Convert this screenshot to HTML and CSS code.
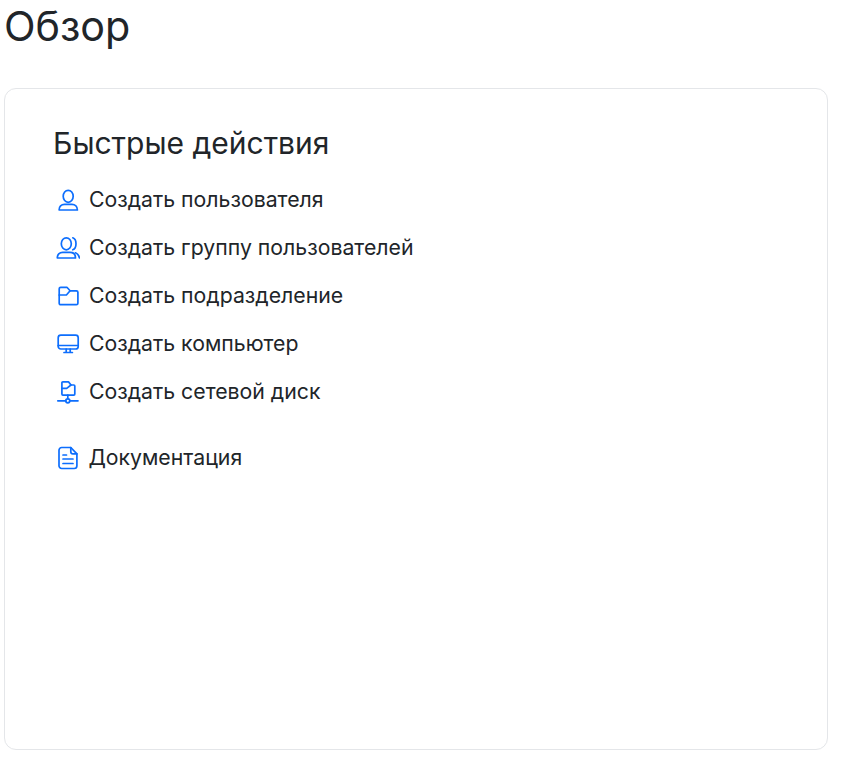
FILE: index.html
```html
<!DOCTYPE html>
<html lang="ru">
<head>
    <meta charset="UTF-8">
    <meta name="viewport" content="width=device-width, initial-scale=1.0">
    <title>Обзор</title>
    <link rel="stylesheet" href="styles.css">
</head>
<body>
    <h1 class="page-title">Обзор</h1>
    <div class="card">
        <h2 class="card-title">Быстрые действия</h2>
        <ul class="actions">
            <li class="action">
                <svg class="action-icon" viewBox="0 0 24 24"><ellipse cx="12.200" cy="8.300" rx="5" ry="6"/><path d="M3.100 22c-.1-3.400 2.200-5.600 5.400-5.600h7.400c3.200 0 5.500 2.200 5.500 5.600z"/></svg>
                <span>Создать пользователя</span>
            </li>
            <li class="action">
                <svg class="action-icon" viewBox="0 0 24 24"><ellipse cx="10.300" cy="7.800" rx="5" ry="6"/><path d="M1.300 22c-.1-3.400 2.200-5.600 5.400-5.600h7.400c3.200 0 5.400 2.200 5.400 5.600z"/><path d="M16.800 1.800c2 .7 3.200 3.200 3.200 6s-1.200 5.300-3.200 6"/><path d="M19.500 16.800c2 .9 3.600 2.700 3.900 5.200"/></svg>
                <span>Создать группу пользователей</span>
            </li>
            <li class="action">
                <svg class="action-icon" viewBox="0 0 24 24"><path d="M3.200 4.800c0-.9.700-1.500 1.500-1.500h6.200l3.200 3.500h6.300c.9 0 1.500.7 1.500 1.500v10.900c0 .9-.6 1.500-1.500 1.500H4.700c-.8 0-1.500-.6-1.500-1.500z"/><path d="M3.200 11h7.200l3.700-4.200"/></svg>
                <span>Создать подразделение</span>
            </li>
            <li class="action">
                <svg class="action-icon" viewBox="0 0 24 24"><rect x="2.200" y="3.200" width="20" height="13.800" rx="2.600"/><path d="M2.200 13.500h20"/><path d="M10.200 17v3.500M14.200 17v3.500M8 20.500h8.400"/></svg>
                <span>Создать компьютер</span>
            </li>
            <li class="action">
                <svg class="action-icon" viewBox="0 0 24 24"><path d="M5.900 2.900c0-.6.400-1 1-1h5.600l2.500 3.100h2.800c.6 0 1 .4 1 1v8.100c0 .6-.4 1-1 1H6.900c-.6 0-1-.4-1-1z"/><path d="M5.900 8.400h4.800L15 5"/><path d="M11.800 15v3.500"/><circle cx="11.800" cy="20.800" r="2"/><path d="M1.800 20.800h8M13.800 20.800h8.200"/></svg>
                <span>Создать сетевой диск</span>
            </li>
            <li class="action action-docs">
                <svg class="action-icon" viewBox="0 0 24 24"><path d="M5.700 1.500h9.100l6.100 6.300v12c0 1.500-1.200 2.700-2.700 2.700H5.700c-1.500 0-2.700-1.200-2.700-2.700V4.200c0-1.500 1.200-2.700 2.700-2.700z"/><path d="M14.800 1.500v4.200c0 1.200.9 2.100 2.100 2.100h4"/><path d="M7 9h3.500M7 13h10M7 17.500h10"/></svg>
                <span>Документация</span>
            </li>
        </ul>
    </div>
</body>
</html>
```

FILE: styles.css
```css
* {
    box-sizing: border-box;
}
body {
    margin: 0;
    padding: 0 14px 13px 4px;
    background: #fff;
    color: #212529;
    font-family: Inter, "Noto Sans", sans-serif;
}
.page-title {
    margin: 0 0 32px;
    height: 56px;
    font-size: 41.25px;
    font-weight: 400;
    line-height: 52px;
}
.card {
    height: 662px;
    padding: 36px 48px;
    border: 1px solid #e4e6e9;
    border-radius: 12px;
    background: #fff;
}
.card-title {
    margin: 0 0 15px;
    font-size: 30px;
    font-weight: 400;
    line-height: 36px;
}
.actions {
    margin: 0;
    padding: 0;
    list-style: none;
}
.action {
    display: flex;
    align-items: center;
    gap: 9px;
    height: 48px;
    font-size: 21.25px;
    color: #212529;
}
.action span {
    margin-bottom: 2px;
}
.action-docs {
    margin-top: 18px;
    gap: 8.4px;
}
.action-icon {
    width: 24px;
    height: 24px;
    margin-left: 3px;
    flex: none;
    fill: none;
    stroke: #0d6efd;
    stroke-width: 1.7;
    stroke-linecap: round;
    stroke-linejoin: round;
}
```
